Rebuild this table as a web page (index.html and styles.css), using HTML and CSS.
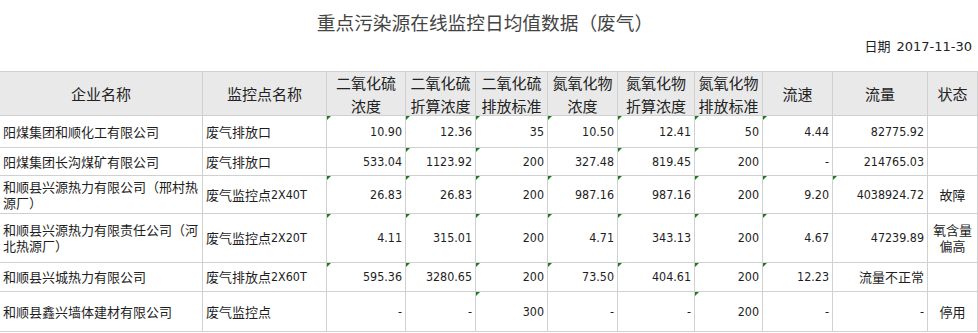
FILE: index.html
```html
<!DOCTYPE html>
<html lang="zh">
<head>
<meta charset="utf-8">
<title>重点污染源在线监控日均值数据（废气）</title>
<link rel="stylesheet" href="styles.css">
</head>
<body>
<div class="page">
  <h1 class="title">重点污染源在线监控日均值数据（废气）</h1>
  <div class="date">日期&nbsp;&nbsp;<span class="dnum">2017-11-30</span></div>
  <div class="sheet">
    <div class="c h">企业名称</div>
    <div class="c h">监控点名称</div>
    <div class="c h">二氧化硫<br>浓度</div>
    <div class="c h">二氧化硫<br>折算浓度</div>
    <div class="c h">二氧化硫<br>排放标准</div>
    <div class="c h">氮氧化物<br>浓度</div>
    <div class="c h">氮氧化物<br>折算浓度</div>
    <div class="c h">氮氧化物<br>排放标准</div>
    <div class="c h">流速</div>
    <div class="c h">流量</div>
    <div class="c h">状态</div>

    <div class="c l">阳煤集团和顺化工有限公司</div>
    <div class="c l">废气排放口</div>
    <div class="c r w">10.90</div>
    <div class="c r w">12.36</div>
    <div class="c r w">35</div>
    <div class="c r w">10.50</div>
    <div class="c r w">12.41</div>
    <div class="c r w">50</div>
    <div class="c r w">4.44</div>
    <div class="c r">82775.92</div>
    <div class="c m"></div>

    <div class="c l">阳煤集团长沟煤矿有限公司</div>
    <div class="c l">废气排放口</div>
    <div class="c r">533.04</div>
    <div class="c r w">1123.92</div>
    <div class="c r w">200</div>
    <div class="c r">327.48</div>
    <div class="c r w">819.45</div>
    <div class="c r w">200</div>
    <div class="c r">-</div>
    <div class="c r">214765.03</div>
    <div class="c m"></div>

    <div class="c l">和顺县兴源热力有限公司（邢村热源厂）</div>
    <div class="c l">废气监控点<span class="n">2X40T</span></div>
    <div class="c r w">26.83</div>
    <div class="c r w">26.83</div>
    <div class="c r w">200</div>
    <div class="c r w">987.16</div>
    <div class="c r w">987.16</div>
    <div class="c r w">200</div>
    <div class="c r w">9.20</div>
    <div class="c r w">4038924.72</div>
    <div class="c m">故障</div>

    <div class="c l">和顺县兴源热力有限责任公司（河北热源厂）</div>
    <div class="c l">废气监控点<span class="n">2X20T</span></div>
    <div class="c r w">4.11</div>
    <div class="c r w">315.01</div>
    <div class="c r w">200</div>
    <div class="c r w">4.71</div>
    <div class="c r w">343.13</div>
    <div class="c r w">200</div>
    <div class="c r w">4.67</div>
    <div class="c r">47239.89</div>
    <div class="c m">氧含量偏高</div>

    <div class="c l">和顺县兴城热力有限公司</div>
    <div class="c l">废气排放点<span class="n">2X60T</span></div>
    <div class="c r w">595.36</div>
    <div class="c r w">3280.65</div>
    <div class="c r w">200</div>
    <div class="c r w">73.50</div>
    <div class="c r w">404.61</div>
    <div class="c r w">200</div>
    <div class="c r w">12.23</div>
    <div class="c r t">流量不正常</div>
    <div class="c m"></div>

    <div class="c l">和顺县鑫兴墙体建材有限公司</div>
    <div class="c l">废气监控点</div>
    <div class="c r">-</div>
    <div class="c r">-</div>
    <div class="c r w">300</div>
    <div class="c r">-</div>
    <div class="c r">-</div>
    <div class="c r w">200</div>
    <div class="c r">-</div>
    <div class="c r">-</div>
    <div class="c m">停用</div>
  </div>
</div>
</body>
</html>
```

FILE: styles.css
```css
html, body {
  margin: 0;
  padding: 0;
  background: #ffffff;
}

.page {
  width: 978px;
  font-family: "Noto Sans CJK SC", sans-serif;
  color: #1e1e1e;
}

.title {
  margin: 0;
  padding: 10px 8px 0 0;
  height: 24px;
  line-height: 24px;
  font-size: 18.7px;
  font-weight: normal;
  text-align: center;
  color: #444444;
}

.date {
  margin-top: 4px;
  height: 16px;
  line-height: 16px;
  padding-right: 6px;
  text-align: right;
  font-size: 13px;
  color: #222222;
}

.dnum {
  font-family: "DejaVu Sans", sans-serif;
  font-size: 13px;
}

.sheet {
  margin-top: 17px;
  display: grid;
  grid-template-columns: 203px 124px 79px 70px 72px 70px 77px 68px 70px 95px 50px;
  grid-template-rows: 44px 32px 28px 38px 49px 29px 40px;
  border-top: 1px solid #d0d0d0;
}

.c {
  position: relative;
  box-sizing: border-box;
  border-right: 1px solid #d0d0d0;
  border-bottom: 1px solid #d0d0d0;
  display: flex;
  align-items: center;
  padding: 0 3px;
  font-size: 13px;
  line-height: 16px;
  color: #1e1e1e;
  overflow: hidden;
}

.h {
  background: #e9e9e9;
  justify-content: center;
  text-align: center;
  font-size: 15px;
  line-height: 23px;
  color: #222222;
}

.l {
  justify-content: flex-start;
  text-align: left;
}

.r {
  justify-content: flex-end;
  text-align: right;
  font-family: "DejaVu Sans Condensed", "Liberation Sans", sans-serif;
  font-stretch: condensed;
  font-size: 12.4px;
}

.r.t {
  font-family: "Noto Sans CJK SC", sans-serif;
  font-stretch: normal;
  font-size: 13px;
}

.m {
  justify-content: center;
  text-align: center;
}

.n {
  font-family: "DejaVu Sans Condensed", "Liberation Sans", sans-serif;
  font-stretch: condensed;
  font-size: 12.4px;
}

.w::before {
  content: "";
  position: absolute;
  left: -1px;
  top: 0;
  width: 0;
  height: 0;
  border-top: 5px solid #1f7a1f;
  border-right: 5px solid transparent;
}
```
